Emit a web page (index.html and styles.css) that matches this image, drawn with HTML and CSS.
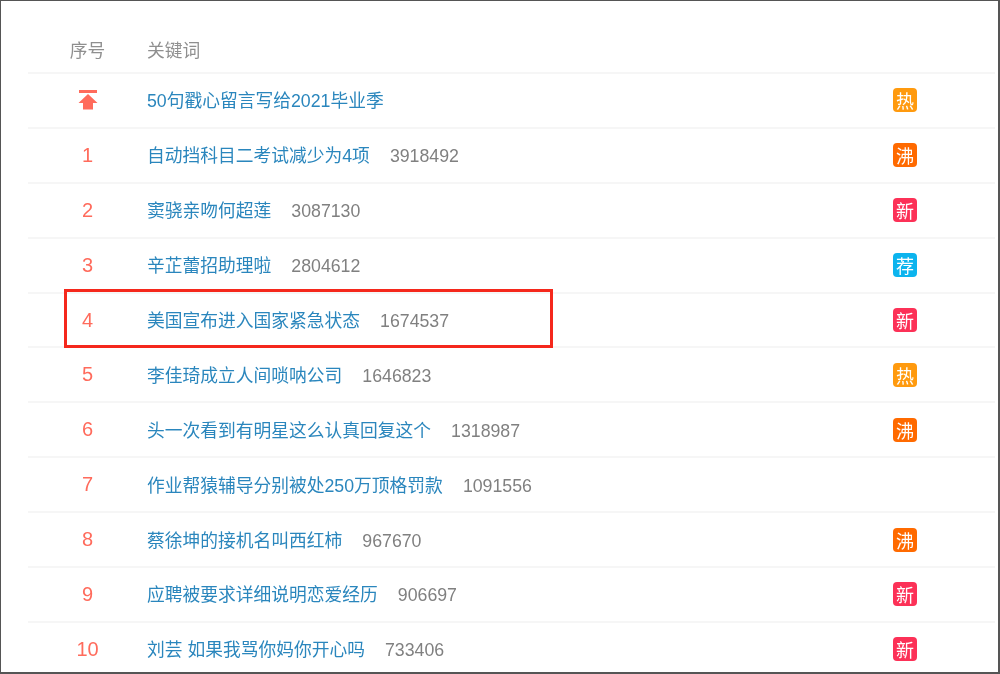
FILE: index.html
```html
<!DOCTYPE html>
<html lang="zh-CN">
<head>
<meta charset="utf-8">
<title>热搜榜</title>
<link rel="stylesheet" href="styles.css">
</head>
<body>
<div class="frame">
  <div class="board">
    <div class="row head">
      <span class="rank-head">序号</span>
      <span class="key-head">关键词</span>
    </div>
    <div class="row">
      <span class="rank"><svg class="top-icon" width="20" height="20" viewBox="0 0 20 20"><rect x="1" y="0" width="18" height="3" fill="#ff6b5c"/><path d="M10 4 L19.5 13 H15 V19.5 H5 V13 H0.5 Z" fill="#ff6b5c"/></svg></span>
      <span class="title"><a class="word">50句戳心留言写给2021毕业季</a></span>
      <span class="tag hot">热</span>
    </div>
    <div class="row">
      <span class="rank">1</span>
      <span class="title"><a class="word">自动挡科目二考试减少为4项</a><span class="count">3918492</span></span>
      <span class="tag boil">沸</span>
    </div>
    <div class="row">
      <span class="rank">2</span>
      <span class="title"><a class="word">窦骁亲吻何超莲</a><span class="count">3087130</span></span>
      <span class="tag new">新</span>
    </div>
    <div class="row">
      <span class="rank">3</span>
      <span class="title"><a class="word">辛芷蕾招助理啦</a><span class="count">2804612</span></span>
      <span class="tag rec">荐</span>
    </div>
    <div class="row marked">
      <span class="rank">4</span>
      <span class="title"><a class="word">美国宣布进入国家紧急状态</a><span class="count">1674537</span></span>
      <span class="tag new">新</span>
      <span class="mark"></span>
    </div>
    <div class="row">
      <span class="rank">5</span>
      <span class="title"><a class="word">李佳琦成立人间唢呐公司</a><span class="count">1646823</span></span>
      <span class="tag hot">热</span>
    </div>
    <div class="row">
      <span class="rank">6</span>
      <span class="title"><a class="word">头一次看到有明星这么认真回复这个</a><span class="count">1318987</span></span>
      <span class="tag boil">沸</span>
    </div>
    <div class="row">
      <span class="rank">7</span>
      <span class="title"><a class="word">作业帮猿辅导分别被处250万顶格罚款</a><span class="count">1091556</span></span>
    </div>
    <div class="row">
      <span class="rank">8</span>
      <span class="title"><a class="word">蔡徐坤的接机名叫西红柿</a><span class="count">967670</span></span>
      <span class="tag boil">沸</span>
    </div>
    <div class="row">
      <span class="rank">9</span>
      <span class="title"><a class="word">应聘被要求详细说明恋爱经历</a><span class="count">906697</span></span>
      <span class="tag new">新</span>
    </div>
    <div class="row">
      <span class="rank">10</span>
      <span class="title"><a class="word">刘芸 如果我骂你妈你开心吗</a><span class="count">733406</span></span>
      <span class="tag new">新</span>
    </div>
  </div>
</div>
</body>
</html>
```
FILE: styles.css
```css
html, body {
  margin: 0;
  padding: 0;
  background: #fff;
}
.frame {
  box-sizing: border-box;
  width: 1000px;
  height: 674px;
  border: solid #555;
  border-width: 1px 2px 2px 1px;
  overflow: hidden;
  padding: 15px 3px 0 27px;
  font-family: "Liberation Sans", "Noto Sans CJK SC", sans-serif;
}
.board {
  filter: blur(0.5px);
}
.row {
  position: relative;
  display: grid;
  grid-template-columns: 119px 1fr 24px;
  align-items: center;
  height: 54.9px;
  box-sizing: border-box;
  padding-right: 78px;
  border-top: 2px solid #f6f6f6;
}
.row.head {
  height: 56px;
  border-top: 0;
  padding-top: 10px;
}
.rank-head, .key-head {
  font-size: 17.75px;
  color: #8f8f8f;
}
.rank-head {
  text-align: center;
}
.rank {
  display: flex;
  justify-content: center;
  font-size: 20px;
  color: #ff6b5c;
}
.top-icon {
  display: block;
}
.title {
  display: flex;
  align-items: baseline;
  gap: 20px;
  padding-bottom: 2px;
  font-size: 17.75px;
  white-space: nowrap;
}
.word {
  color: #2a86bd;
}
.count {
  color: #808080;
}
.tag {
  width: 24px;
  height: 24px;
  border-radius: 4px;
  display: flex;
  align-items: center;
  justify-content: center;
  color: #fff;
  font-size: 18px;
}
.hot { background: #ff9a0e; }
.boil { background: #ff6a00; }
.new { background: #fc3157; }
.rec { background: #0cb4ee; }
.mark {
  position: absolute;
  z-index: 1;
  left: 36px;
  top: -4.5px;
  width: 489px;
  height: 58.5px;
  box-sizing: border-box;
  border: 3px solid #f5281c;
}
```
